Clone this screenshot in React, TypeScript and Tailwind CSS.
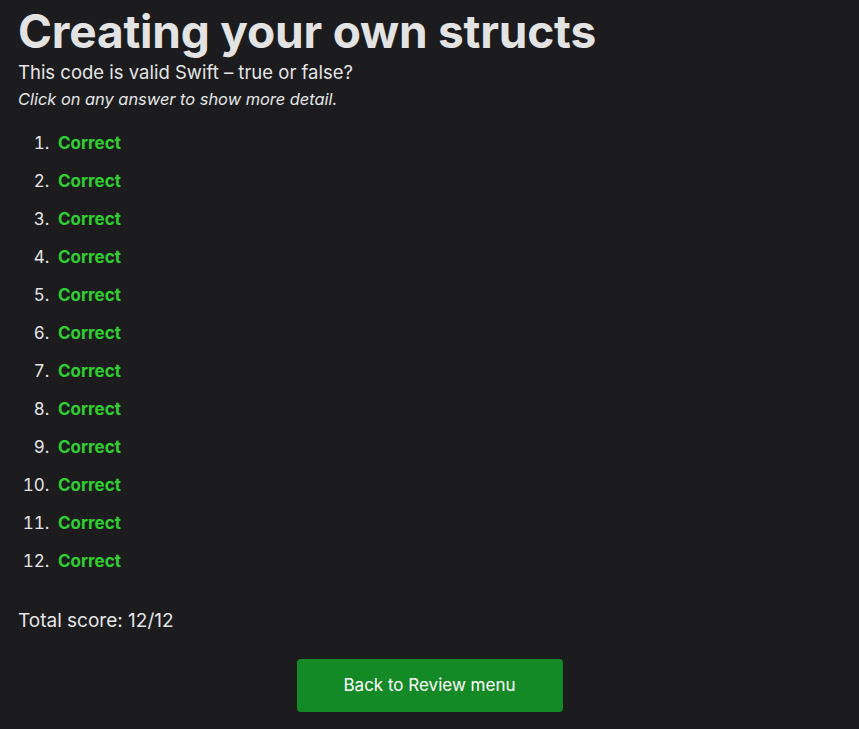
import React from "react";

const answers = Array.from({ length: 12 }, (_, i) => i + 1);

export default function App() {
  return (
    <div
      className="min-h-[729px] bg-[#1c1c1e] text-[#e5e5e7] px-[18px] pt-[3px] pb-4"
      style={{ fontFamily: "Inter, 'Noto Sans', sans-serif" }}
    >
      <h1 className="text-[46px] font-bold leading-[56px] tracking-[-0.2px] text-[#e3e3e3]">
        Creating your own structs
      </h1>
      <p className="text-[18.5px] leading-[24px] mt-[1px]">This code is valid Swift – true or false?</p>
      <p className="text-[16.4px] italic leading-[24px] mt-[3px]">Click on any answer to show more detail.</p>

      <ol className="list-decimal pl-[36px] mt-[20px] text-[17px] marker:text-[#e5e5e7]">
        {answers.map((n) => (
          <li key={n} className="h-[38px] leading-[24px] pl-[4px]">
            <button className="font-bold text-[#2fcf2f]">Correct</button>
          </li>
        ))}
      </ol>

      <p className="text-[19px] leading-[24px] mt-[22px]">Total score: 12/12</p>

      <div className="flex justify-center mt-[26px]">
        <button className="w-[266px] h-[53px] rounded-[4px] bg-[#148a26] text-white text-[17px]">
          Back to Review menu
        </button>
      </div>
    </div>
  );
}
